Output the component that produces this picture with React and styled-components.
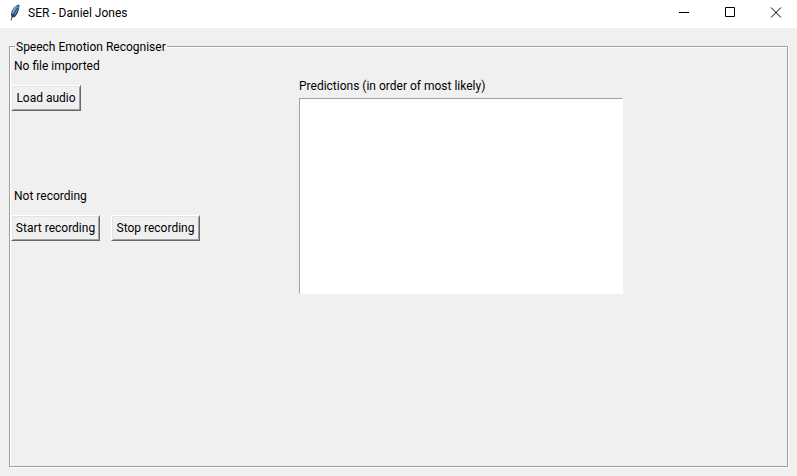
import React from 'react';
import styled, { createGlobalStyle } from 'styled-components';

const GlobalStyle = createGlobalStyle`
  *, *::before, *::after { box-sizing: border-box; }
  body {
    margin: 0;
    background: #f0f0f0;
    color: #000;
    font: 12px/16px Roboto, "Open Sans", sans-serif;
  }
`;

const Window = styled.div`
  display: flex;
  flex-direction: column;
  min-height: 100vh;
`;

const TitleBar = styled.header`
  display: flex;
  align-items: center;
  height: 28px;
  padding-left: 8px;
  padding-bottom: 2px;
  background: #fff;
  overflow: hidden;
`;

const Title = styled.h1`
  flex: 1;
  margin: 0 0 0 4px;
  font-size: 12px;
  font-weight: 400;
`;

const CaptionButtons = styled.div`
  display: flex;
  margin-right: -2px;
`;

const CaptionButton = styled.button`
  display: flex;
  align-items: center;
  justify-content: center;
  width: 46px;
  height: 26px;
  padding: 0;
  border: 0;
  background: transparent;
  color: #000;
  &:hover { background: #e5e5e5; }
`;

const Content = styled.main`
  flex: 1;
  display: flex;
  padding: 11px 9px 9px;
`;

const Frame = styled.fieldset`
  flex: 1;
  min-width: 0;
  margin: 0;
  padding: 0 1px;
  border: 1px solid #a0a0a0;
  box-shadow: 1px 1px 0 #fff, inset 1px 1px 0 #fff;
`;

const Legend = styled.legend`
  height: 15px;
  margin-left: 4px;
  padding: 0 1px;
  background: #f0f0f0;
`;

const Columns = styled.div`
  display: grid;
  grid-template-columns: 288px minmax(0, 324px);
  align-items: start;
`;

const Controls = styled.div`
  display: grid;
  gap: 77px;
  padding-top: 4px;
`;

const ControlGroup = styled.section`
  display: grid;
  gap: 11px;
`;

const Status = styled.p`
  margin: 0;
  padding-left: 3px;
`;

const ButtonRow = styled.div`
  display: flex;
  gap: 11px;
`;

const PushButton = styled.button`
  min-width: ${({ $wide }) => ($wide ? '89px' : '70px')};
  height: 26px;
  padding: 0 3px;
  border: 1px solid;
  border-color: #fff #696969 #696969 #fff;
  border-radius: 0;
  box-shadow: inset 1px 1px 0 #e3e3e3, inset -1px -1px 0 #a0a0a0;
  background: #f0f0f0;
  color: #000;
  font: inherit;
  white-space: nowrap;
`;

const Predictions = styled.div`
  display: flex;
  flex-direction: column;
  gap: 4px;
  padding-top: 24px;
`;

const Output = styled.textarea`
  display: block;
  width: 100%;
  height: 196px;
  padding: 1px;
  border: 1px solid;
  border-color: #a0a0a0 #fff #fff #a0a0a0;
  border-radius: 0;
  background: #fff;
  font: inherit;
  resize: none;
  outline: none;
`;

const Feather = () => (
  <svg width="16" height="18" viewBox="0 0 16 18" aria-hidden="true">
    <path d="M11 0.5 8.5 1.5 5.5 4 3.5 7.5 3 11 4 13.5 7 13 9.5 9.5 11 5.5 11.5 1.5Z" fill="#2d4358" />
    <path d="M10.5 1.5 8.5 3 5.5 6.5 4.5 10.5 6 11.5 8.5 8.5 10.5 4.5Z" fill="#5a9be0" />
    <path d="M8.5 2.5 6 5 4.5 9" fill="none" stroke="#a3c4e4" />
    <path d="M9.5 4 6 9.5 4 13 3 16.5" fill="none" stroke="#16212d" strokeWidth="0.8" />
  </svg>
);

const CaptionIcon = ({ d }) => (
  <svg width="12" height="12" viewBox="0 0 12 12" fill="none" stroke="currentColor" aria-hidden="true">
    <path d={d} />
  </svg>
);

const captionButtons = [
  { label: 'Minimize', d: 'M1 5.5H11' },
  { label: 'Maximize', d: 'M1.5 0.5H10.5V9.5H1.5Z' },
  { label: 'Close', d: 'M1 0.5 11 10.5M11 0.5 1 10.5' },
];

export default function App() {
  return (
    <>
      <GlobalStyle />
      <Window>
        <TitleBar>
          <Feather />
          <Title>SER - Daniel Jones</Title>
          <CaptionButtons>
            {captionButtons.map(({ label, d }) => (
              <CaptionButton key={label} type="button" aria-label={label}>
                <CaptionIcon d={d} />
              </CaptionButton>
            ))}
          </CaptionButtons>
        </TitleBar>
        <Content>
          <Frame>
            <Legend>Speech Emotion Recogniser</Legend>
            <Columns>
              <Controls>
                <ControlGroup>
                  <Status>No file imported</Status>
                  <ButtonRow>
                    <PushButton type="button">Load audio</PushButton>
                  </ButtonRow>
                </ControlGroup>
                <ControlGroup>
                  <Status>Not recording</Status>
                  <ButtonRow>
                    <PushButton type="button" $wide>Start recording</PushButton>
                    <PushButton type="button" $wide>Stop recording</PushButton>
                  </ButtonRow>
                </ControlGroup>
              </Controls>
              <Predictions>
                <label htmlFor="predictions">Predictions (in order of most likely)</label>
                <Output id="predictions" readOnly />
              </Predictions>
            </Columns>
          </Frame>
        </Content>
      </Window>
    </>
  );
}
